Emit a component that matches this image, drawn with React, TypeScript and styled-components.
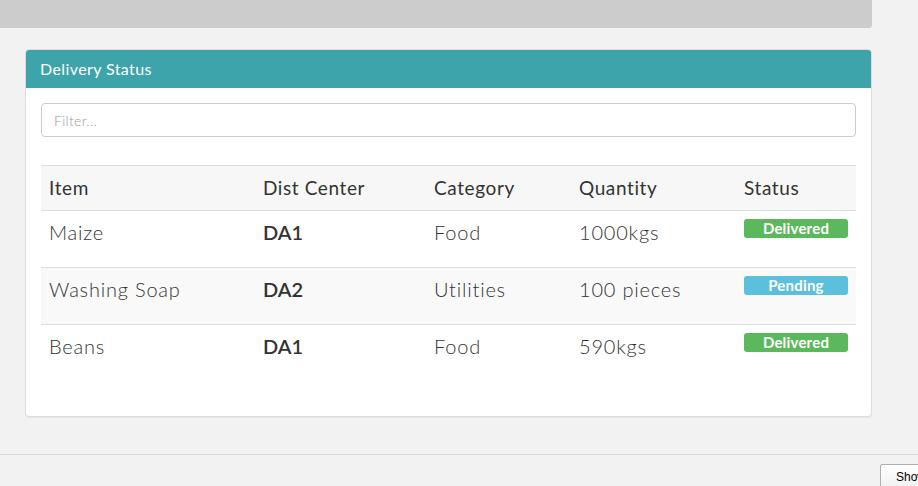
import React from "react";
import styled, { createGlobalStyle } from "styled-components";

const Global = createGlobalStyle`
  html, body { margin: 0; padding: 0; }
  body {
    background: #f2f2f2;
    font-family: Lato, "Open Sans", sans-serif;
    color: #333;
    width: 918px;
    height: 486px;
    overflow: hidden;
  }
`;

const Page = styled.div`
  display: flex;
  flex-direction: column;
  height: 486px;
`;

const Main = styled.div`
  width: 872px;
  display: flex;
  flex-direction: column;
`;

const TopBar = styled.div`
  height: 28px;
  background: #cccccc;
  border-bottom-right-radius: 3px;
`;

const Content = styled.div`
  padding: 21px 0 0 25px;
`;

const Panel = styled.section`
  background: #fff;
  border: 1px solid #dcdcdc;
  border-radius: 4px;
  box-shadow: 0 1px 1px rgba(0, 0, 0, 0.05);
  height: 368px;
  box-sizing: border-box;
  overflow: hidden;
`;

const PanelHeading = styled.div`
  background: #3ea4ab;
  color: #fff;
  height: 39px;
  padding: 0 15px 1px;
  box-sizing: border-box;
  display: flex;
  align-items: center;
  font-size: 16px;
  font-weight: 400;
  letter-spacing: 0.4px;
  margin: -1px -1px 0;
  border-radius: 3px 3px 0 0;
`;

const PanelBody = styled.div`
  padding: 15px 15px 0;
`;

const FilterInput = styled.input`
  box-sizing: border-box;
  width: 100%;
  height: 34px;
  border: 1px solid #cccccc;
  border-radius: 4px;
  padding: 0 12px;
  font-family: inherit;
  font-size: 14px;
  font-weight: 300;
  color: #555;
  outline: none;
  &::placeholder { color: #999; letter-spacing: 0.3px; }
`;

const Table = styled.table`
  width: 100%;
  margin-top: 28px;
  border-collapse: collapse;
  table-layout: fixed;
`;

const HeadRow = styled.tr`
  background: #f7f7f7;
`;

const Th = styled.th<{ $w: number }>`
  width: ${(p) => p.$w}px;
  text-align: left;
  font-size: 19px;
  font-weight: 400;
  letter-spacing: 0.6px;
  color: #333;
  height: 45px;
  padding: 0 8px 11px;
  vertical-align: bottom;
  box-sizing: border-box;
  border-top: 1px solid #dddddd;
  border-bottom: 1px solid #dddddd;
`;

const Row = styled.tr<{ $striped: boolean }>`
  background: ${(p) => (p.$striped ? "#f9f9f9" : "#fff")};
  border-bottom: 1px solid #dddddd;
  &:last-child { border-bottom: none; }
`;

const Td = styled.td<{ $bold?: boolean }>`
  height: 57px;
  box-sizing: border-box;
  padding: 9px 8px 0;
  vertical-align: top;
  font-size: 20px;
  font-weight: ${(p) => (p.$bold ? 600 : 300)};
  letter-spacing: ${(p) => (p.$bold ? "0" : "0.8px")};
  color: #333;
  line-height: 24px;
`;

const BadgeCell = styled.td`
  height: 57px;
  box-sizing: border-box;
  padding: 8px 8px 0;
  vertical-align: top;
`;

const Badge = styled.span<{ $kind: "ok" | "pending" }>`
  display: flex;
  align-items: center;
  justify-content: center;
  width: 104px;
  height: 19px;
  border-radius: 3px;
  background: ${(p) => (p.$kind === "ok" ? "#5cb85c" : "#5bc0de")};
  color: #fff;
  font-size: 15px;
  font-weight: 700;
  letter-spacing: 0.2px;
  line-height: 1;
`;

const Footer = styled.footer`
  margin-top: 37px;
  border-top: 1px solid #d6d6d6;
  flex: 1;
  display: flex;
  justify-content: flex-end;
  padding-top: 9px;
`;

const ShowButton = styled.button`
  margin-right: -30px;
  height: 26px;
  width: 68px;
  padding: 0 0 0 15px;
  text-align: left;
  border: 1px solid #adadad;
  border-radius: 2px;
  background: linear-gradient(#ffffff, #f0f0f0);
  font-family: "Liberation Sans", Arial, sans-serif;
  font-size: 12px;
  color: #000;
`;

const rows = [
  { item: "Maize", center: "DA1", category: "Food", qty: "1000kgs", status: "Delivered" },
  { item: "Washing Soap", center: "DA2", category: "Utilities", qty: "100 pieces", status: "Pending" },
  { item: "Beans", center: "DA1", category: "Food", qty: "590kgs", status: "Delivered" },
];

export default function App() {
  return (
    <Page>
      <Global />
      <Main>
        <TopBar />
        <Content>
          <Panel>
            <PanelHeading>Delivery Status</PanelHeading>
            <PanelBody>
              <FilterInput placeholder="Filter..." />
              <Table>
                <thead>
                  <HeadRow>
                    <Th $w={214}>Item</Th>
                    <Th $w={171}>Dist Center</Th>
                    <Th $w={145}>Category</Th>
                    <Th $w={165}>Quantity</Th>
                    <Th $w={120}>Status</Th>
                  </HeadRow>
                </thead>
                <tbody>
                  {rows.map((r, i) => (
                    <Row key={i} $striped={i % 2 === 1}>
                      <Td>{r.item}</Td>
                      <Td $bold>{r.center}</Td>
                      <Td>{r.category}</Td>
                      <Td>{r.qty}</Td>
                      <BadgeCell>
                        <Badge $kind={r.status === "Delivered" ? "ok" : "pending"}>{r.status}</Badge>
                      </BadgeCell>
                    </Row>
                  ))}
                </tbody>
              </Table>
            </PanelBody>
          </Panel>
        </Content>
      </Main>
      <Footer>
        <ShowButton>Show</ShowButton>
      </Footer>
    </Page>
  );
}
